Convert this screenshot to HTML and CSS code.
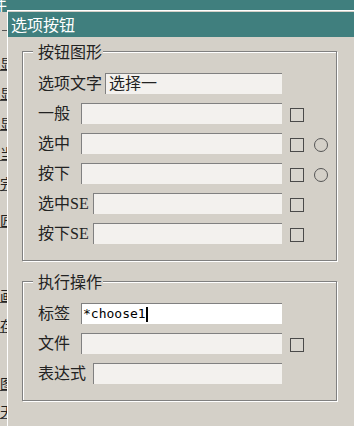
FILE: index.html
```html
<!DOCTYPE html>
<html lang="zh-CN">

<head>
    <meta charset="UTF-8">
    <meta name="viewport" content="width=device-width, initial-scale=1.0">
    <title>选项按钮</title>
    <link rel="stylesheet" href="styles.css">
</head>

<body>

    <div class="desktop">
        <!-- window behind, only its left edge shows -->
        <div class="back">
            <div class="back-title"><span>件</span></div>
            <div class="back-list">
                <span class="back-dash"></span>
                <span class="back-item first">显</span>
                <span class="back-item">显</span>
                <span class="back-item">显</span>
                <span class="back-item">当</span>
                <span class="back-item">完</span>
                <span class="back-item m23">匠</span>
                <span class="back-item m61">画</span>
                <span class="back-item">存</span>
                <span class="back-item m44">图</span>
                <span class="back-item m14">天</span>
            </div>
        </div>

        <!-- Option button dialog -->
        <div class="window">
            <div class="title">选项按钮</div>
            <div class="win-body">

                <fieldset class="group">
                    <legend>按钮图形</legend>
                    <div class="row">
                        <span class="label wide">选项文字</span>
                        <div class="field">选择一</div>
                        <div class="extras"></div>
                    </div>
                    <div class="row">
                        <span class="label">一般</span>
                        <div class="field"></div>
                        <div class="extras"><span class="check"></span></div>
                    </div>
                    <div class="row">
                        <span class="label">选中</span>
                        <div class="field"></div>
                        <div class="extras"><span class="check"></span><span class="radio"></span></div>
                    </div>
                    <div class="row">
                        <span class="label">按下</span>
                        <div class="field"></div>
                        <div class="extras"><span class="check"></span><span class="radio"></span></div>
                    </div>
                    <div class="row">
                        <span class="label mid">选中SE</span>
                        <div class="field"></div>
                        <div class="extras"><span class="check"></span></div>
                    </div>
                    <div class="row">
                        <span class="label mid">按下SE</span>
                        <div class="field"></div>
                        <div class="extras"><span class="check"></span></div>
                    </div>
                </fieldset>

                <fieldset class="group group-action">
                    <legend>执行操作</legend>
                    <div class="row">
                        <span class="label">标签</span>
                        <div class="field active">*choose1<span class="caret"></span></div>
                        <div class="extras"></div>
                    </div>
                    <div class="row">
                        <span class="label">文件</span>
                        <div class="field"></div>
                        <div class="extras"><span class="check"></span></div>
                    </div>
                    <div class="row">
                        <span class="label mid">表达式</span>
                        <div class="field"></div>
                        <div class="extras"></div>
                    </div>
                </fieldset>

            </div>
        </div>
    </div>

</body>

</html>
```

FILE: styles.css
```css
/* Global Styles */
body {
    margin: 0;
    padding: 0;
    background-color: #d4d0c8;
    font-family: "Liberation Serif", "Noto Sans CJK SC", serif;
    color: #222;
    overflow: hidden;
}

.desktop {
    position: relative;
    width: 354px;
    height: 426px;
    overflow: hidden;
}

/* Back window */
.back-title {
    height: 12px;
    background-color: #407f7e;
    overflow: hidden;
}

.back-title span {
    display: block;
    margin: -4px 0 0 -9px;
    font-family: "Noto Sans CJK SC", sans-serif;
    font-size: 16px;
    line-height: 16px;
    color: #fff;
}

.back-list {
    width: 7px;
    overflow: hidden;
    display: flex;
    flex-direction: column;
}

.back-dash {
    display: block;
    width: 5px;
    height: 1px;
    margin: 18px 0 0 2px;
    background-color: #555;
}

.back-item {
    display: block;
    width: 16px;
    height: 13px;
    margin-top: 16px;
    font-family: "Noto Sans CJK SC", sans-serif;
    font-size: 14px;
    line-height: 13px;
    color: #222;
    border-bottom: 1px solid #444;
}

.back-item.first { margin-top: 26px; }
.back-item.m23 { margin-top: 23px; }
.back-item.m61 { margin-top: 61px; }
.back-item.m44 { margin-top: 44px; }
.back-item.m14 { margin-top: 14px; }

/* Front window */
.window {
    position: absolute;
    left: 7px;
    top: 10px;
    width: 360px;
    height: 430px;
    padding-top: 1px;
    border-top: 1px solid #fff;
    border-left: 1px solid #fff;
    background-color: #d4d0c8;
}

.title {
    height: 25px;
    padding-left: 3px;
    background-color: #407f7e;
    color: #fff;
    font-family: "Noto Sans CJK SC", sans-serif;
    font-size: 16px;
    line-height: 25px;
}

.win-body {
    padding: 6px 0 0 14px;
}

/* Group boxes */
.group {
    box-sizing: border-box;
    width: 315px;
    min-width: 0;
    margin: 0;
    padding: 14px 0 16px 15px;
    border: 1px solid #808080;
    box-shadow: inset 1px 1px #fff, 1px 1px #fff;
}

.group legend {
    margin-left: -5px;
    padding: 0 1px 0 5px;
    background-color: #d4d0c8;
    font-family: "Noto Sans CJK SC", sans-serif;
    font-size: 16px;
    line-height: 16px;
    color: #222;
}

.group-action {
    margin-top: 12px;
}

.row {
    display: flex;
    align-items: center;
    height: 21px;
    margin-bottom: 9px;
}

.row:last-child {
    margin-bottom: 0;
}

.label {
    flex-shrink: 0;
    width: 43px;
    font-size: 16px;
    line-height: 21px;
    white-space: nowrap;
}

.label.wide { width: 67px; }
.label.mid { width: 55px; }

.field {
    flex: 1;
    box-sizing: border-box;
    height: 21px;
    padding-left: 3px;
    border-top: 1px solid #808080;
    border-left: 1px solid #808080;
    background-color: #f3f1ee;
    font-size: 16px;
    line-height: 20px;
    white-space: nowrap;
}

.field.active {
    padding-left: 1px;
    background-color: #fff;
    color: #000;
    font-family: "DejaVu Sans Mono", monospace;
    font-size: 13px;
    display: flex;
    align-items: center;
}

.caret {
    display: inline-block;
    width: 2px;
    height: 15px;
    margin-left: 0;
    background-color: #000;
}

.extras {
    flex-shrink: 0;
    box-sizing: border-box;
    width: 54px;
    padding-left: 8px;
    display: flex;
    align-items: center;
    gap: 10px;
}

.check {
    box-sizing: border-box;
    width: 14px;
    height: 14px;
    margin-top: 2px;
    border: 1px solid #4a4a4a;
    background-color: #d8d5ce;
}

.radio {
    box-sizing: border-box;
    width: 14px;
    height: 14px;
    margin-top: 2px;
    border: 1px solid #555;
    border-radius: 50%;
}
```
